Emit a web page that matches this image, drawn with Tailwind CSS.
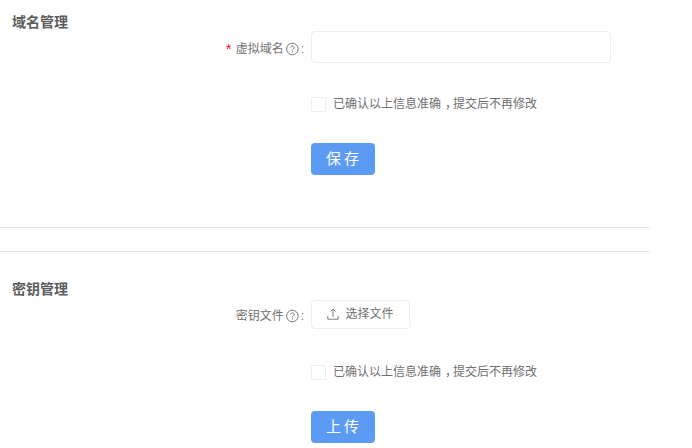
<!DOCTYPE html>
<html lang="zh">

<head>
    <meta charset="UTF-8" />
    <title>域名管理</title>
    <script src="https://cdn.jsdelivr.net/npm/@tailwindcss/browser@4"></script>
</head>

<body class="bg-white w-[692px] h-[448px] overflow-hidden font-['Liberation_Sans','Noto_Sans_CJK_SC',sans-serif] text-[12px] text-[#707070]">

    <!-- 域名管理 -->
    <section class="w-[650px] h-[228px] border-b border-[#e4e4e4] pt-[13px]">
        <h2 class="pl-3 text-[14px] leading-[18px] font-bold text-[#5c5c5c]">域名管理</h2>
        <div class="flex items-center h-[32px]">
            <div class="w-[311px] flex items-center justify-end pr-[7px] pt-[3px]">
                <span class="text-[#f5151f] mr-[4px] text-[15px] leading-[14px]">*</span>
                <span>虚拟域名</span>
                <svg class="ml-[1px]" width="14" height="14" viewBox="0 0 14 14" fill="none" stroke="#777777" stroke-width="1">
                    <circle cx="7.4" cy="7" r="5.8" />
                    <path d="M5.7 5.6a1.7 1.7 0 1 1 2.7 1.4c-.6.4-1 .7-1 1.4" />
                    <path d="M7.4 9.3v1.1" />
                </svg>
                <span class="ml-[2px]">:</span>
            </div>
            <div class="w-[300px] h-[32px] border border-[#eeeeee] rounded-[4px] bg-white"></div>
        </div>
        <div class="flex items-center ml-[311px] mt-[33px] h-[16px]">
            <span class="w-[15px] h-[15px] border border-[#eeeeee] rounded-[2px]"></span>
            <span class="ml-[7px]">已确认以上信息准确<span class="ml-[4px] tracking-[-4px]">，</span>提交后不再修改</span>
        </div>
        <button class="block ml-[311px] mt-[31px] w-[64px] h-[32px] pl-[2px] rounded-[4px] bg-[#5c9bf3] text-white text-[15px] tracking-[3px]">保存</button>
    </section>

    <!-- 密钥管理 -->
    <section class="w-[650px] border-t border-[#e4e4e4] mt-[23px] pt-[28px]">
        <h2 class="pl-3 text-[14px] leading-[18px] font-bold text-[#5c5c5c]">密钥管理</h2>
        <div class="flex items-center mt-[2px] h-[28px]">
            <div class="w-[311px] flex items-center justify-end pr-[7px] pt-[4px]">
                <span>密钥文件</span>
                <svg class="ml-[1px]" width="14" height="14" viewBox="0 0 14 14" fill="none" stroke="#777777" stroke-width="1">
                    <circle cx="7.4" cy="7" r="5.8" />
                    <path d="M5.7 5.6a1.7 1.7 0 1 1 2.7 1.4c-.6.4-1 .7-1 1.4" />
                    <path d="M7.4 9.3v1.1" />
                </svg>
                <span class="ml-[2px]">:</span>
            </div>
            <button class="w-[99px] h-[29px] border border-[#eeeeee] rounded-[4px] flex items-center justify-center gap-[6px]">
                <svg width="12" height="12" viewBox="0 0 12 12" fill="none" stroke="#808080" stroke-width="1">
                    <path d="M6 9V1.2M3.6 3.4 6 1l2.4 2.4" />
                    <path d="M.8 8v3.2h10.4V8" />
                </svg>
                <span>选择文件</span>
            </button>
        </div>
        <div class="flex items-center ml-[311px] mt-[36px] h-[16px]">
            <span class="w-[15px] h-[15px] border border-[#eeeeee] rounded-[2px]"></span>
            <span class="ml-[7px]">已确认以上信息准确<span class="ml-[4px] tracking-[-4px]">，</span>提交后不再修改</span>
        </div>
        <button class="block ml-[311px] mt-[31px] w-[64px] h-[32px] pl-[2px] rounded-[4px] bg-[#5c9bf3] text-white text-[15px] tracking-[3px]">上传</button>
    </section>

</body>

</html>
